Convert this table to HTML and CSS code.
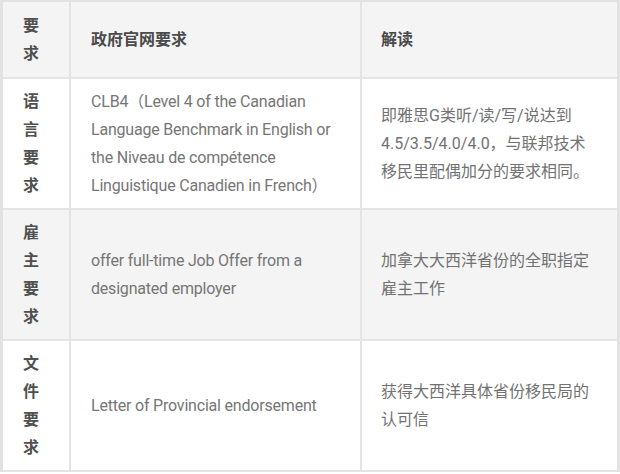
FILE: index.html
```html
<!DOCTYPE html>
<html lang="zh-CN">
<head>
<meta charset="utf-8">
<title>要求</title>
<link rel="stylesheet" href="styles.css">
</head>
<body>
<table class="req-table">
  <colgroup>
    <col class="c1">
    <col class="c2">
    <col class="c3">
  </colgroup>
  <thead>
    <tr class="row-alt">
      <th class="label">要求</th>
      <th>政府官网要求</th>
      <th>解读</th>
    </tr>
  </thead>
  <tbody>
    <tr>
      <td class="label">语言要求</td>
      <td class="en">CLB4（Level 4 of the Canadian Language Benchmark in English or the Niveau de compétence Linguistique Canadien in French）</td>
      <td>即雅思G类听/读/写/说达到4.5/3.5/4.0/4.0，与联邦技术移民里配偶加分的要求相同。</td>
    </tr>
    <tr class="row-alt">
      <td class="label">雇主要求</td>
      <td class="en">offer full-time Job Offer from a designated employer</td>
      <td>加拿大大西洋省份的全职指定雇主工作</td>
    </tr>
    <tr>
      <td class="label">文件要求</td>
      <td class="en">Letter of Provincial endorsement</td>
      <td>获得大西洋具体省份移民局的认可信</td>
    </tr>
  </tbody>
</table>
</body>
</html>
```

FILE: styles.css
```css
html, body {
  margin: 0;
  padding: 0;
  background: #ffffff;
}

.req-table {
  width: 620px;
  border-collapse: separate;
  border-spacing: 0;
  border-top: 2px solid #e2e2e2;
  border-left: 3px solid #e2e2e2;
  border-right: 3px solid #e2e2e2;
  table-layout: fixed;
  font-family: Roboto, "Noto Sans CJK SC", sans-serif;
  font-size: 16px;
  line-height: 28px;
  color: #727272;
}

.c1 { width: 68px; }
.c2 { width: 291px; }
.c3 { width: 255px; }

.req-table th,
.req-table td {
  padding: 9px 20px 8px 20px;
  text-align: left;
  vertical-align: middle;
  border-bottom: 2px solid #e4e4e4;
  border-right: 2px solid #e4e4e4;
  word-wrap: break-word;
}

.req-table th:last-child,
.req-table td:last-child {
  border-right: none;
  padding-left: 19px;
}

.req-table th {
  font-weight: bold;
  color: #4a4a4a;
  padding-top: 10px;
  padding-bottom: 9px;
}

.req-table .en {
  letter-spacing: -0.2px;
  color: #767676;
}

.req-table .label {
  padding-left: 20px;
  padding-right: 20px;
  font-weight: bold;
  color: #505050;
}

.row-alt {
  background: #f4f4f4;
}
```
